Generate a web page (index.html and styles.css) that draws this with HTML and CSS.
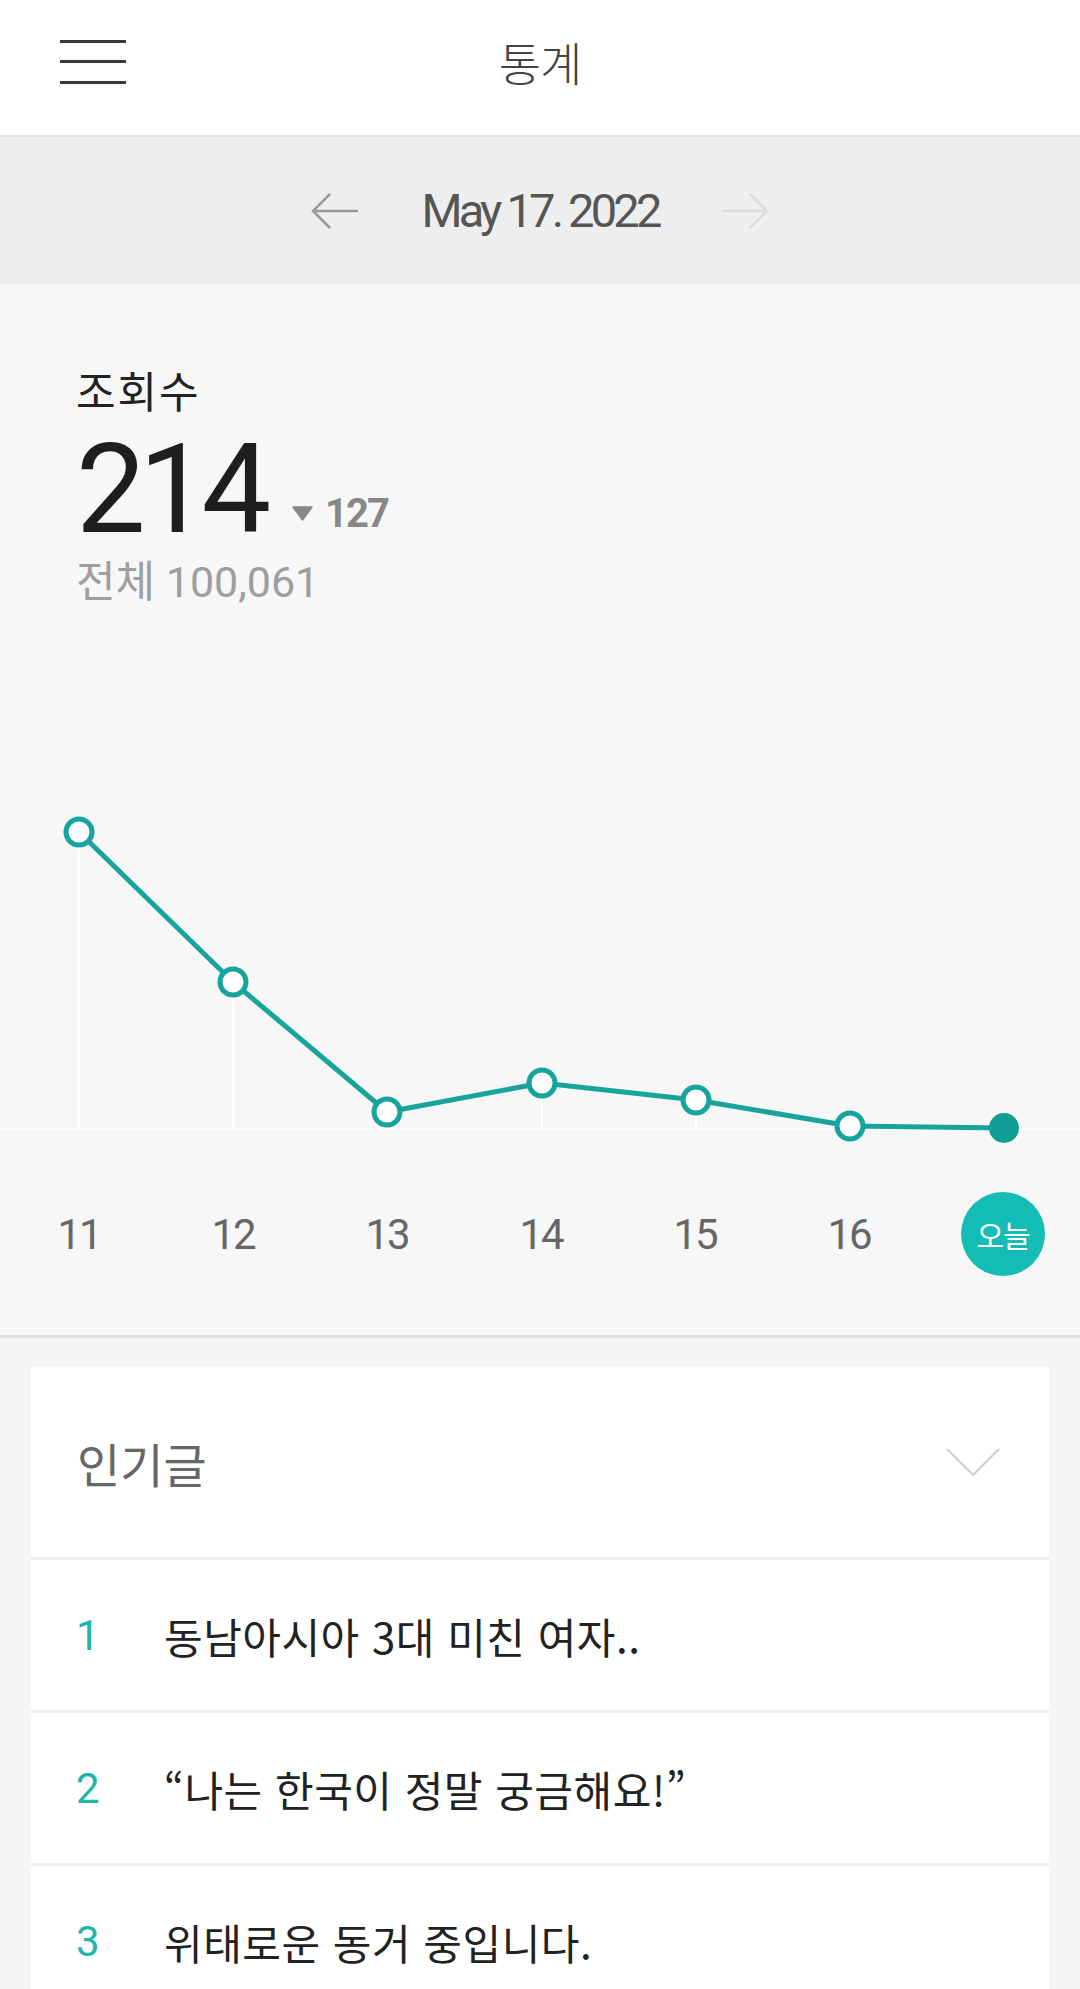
FILE: index.html
```html
<!DOCTYPE html>
<html lang="ko">
<head>
    <meta charset="UTF-8">
    <title>통계</title>
    <link rel="stylesheet" href="styles.css">
</head>
<body>
    <div class="topbar">
        <div class="menu-icon">
            <svg width="66" height="45" viewBox="0 0 66 45">
                <rect x="0" y="0" width="66" height="3"/>
                <rect x="0" y="20" width="66" height="3"/>
                <rect x="0" y="41" width="66" height="3"/>
            </svg>
        </div>
        <div class="title">통계</div>
        <div></div>
    </div>

    <div class="datebar">
        <svg class="arrow prev" width="48" height="38" viewBox="0 0 48 38">
            <path d="M47 19 H3 M19 2 L2 19 L19 36"/>
        </svg>
        <div class="date">May 17. 2022</div>
        <svg class="arrow next" width="48" height="38" viewBox="0 0 48 38">
            <path d="M1 19 H45 M29 2 L46 19 L29 36"/>
        </svg>
    </div>

    <div class="stats">
        <div class="summary">
            <div class="label">조회수</div>
            <div class="count">
                <span class="today">214</span>
                <span class="diff">
                    <svg width="21" height="15" viewBox="0 0 21 15"><path d="M1 1 H20 L10.5 14 Z"/></svg>
                    127
                </span>
            </div>
            <div class="total">전체 100,061</div>
        </div>

        <svg class="chart" width="1080" height="350" viewBox="0 0 1080 350">
            <g class="grid">
                <line x1="0" y1="329" x2="1080" y2="329"/>
                <line x1="79" y1="32" x2="79" y2="329"/>
                <line x1="233" y1="182" x2="233" y2="329"/>
                <line x1="387" y1="312" x2="387" y2="329"/>
                <line x1="542" y1="283" x2="542" y2="329"/>
                <line x1="696" y1="300" x2="696" y2="329"/>
                <line x1="850" y1="326" x2="850" y2="329"/>
            </g>
            <polyline class="trend" points="79,32 233,182 387,312 542,283 696,300 850,326 1004,328"/>
            <g class="dots">
                <circle cx="79" cy="32" r="13"/>
                <circle cx="233" cy="182" r="13"/>
                <circle cx="387" cy="312" r="13"/>
                <circle cx="542" cy="283" r="13"/>
                <circle cx="696" cy="300" r="13"/>
                <circle cx="850" cy="326" r="13"/>
            </g>
            <circle class="dot-today" cx="1004" cy="328" r="15"/>
        </svg>

        <div class="days">
            <div class="day">11</div>
            <div class="day">12</div>
            <div class="day">13</div>
            <div class="day">14</div>
            <div class="day">15</div>
            <div class="day">16</div>
            <div class="day"><span class="today-badge">오늘</span></div>
        </div>
    </div>

    <div class="popular">
        <div class="card">
            <div class="card-head">
                <span>인기글</span>
                <svg class="chevron" width="56" height="30" viewBox="0 0 56 30">
                    <path d="M2 2 L28 28 L54 2"/>
                </svg>
            </div>
            <div class="post"><span class="rank">1</span><span class="post-title">동남아시아 3대 미친 여자..</span></div>
            <div class="post"><span class="rank">2</span><span class="post-title">“나는 한국이 정말 궁금해요!”</span></div>
            <div class="post"><span class="rank">3</span><span class="post-title">위태로운 동거 중입니다.</span></div>
        </div>
    </div>
</body>
</html>
```

FILE: styles.css
```css
body {
    font-family: Roboto, "Noto Sans CJK KR", sans-serif;
    background-color: #f5f5f5;
    margin: 0;
    padding: 0;
    color: #222;
}
.topbar {
    display: grid;
    grid-template-columns: 1fr auto 1fr;
    align-items: center;
    height: 121px;
    padding-bottom: 14px;
    background-color: #fff;
    border-bottom: 2px solid #e2e2e2;
}
.menu-icon {
    padding-left: 60px;
    display: flex;
    margin-top: 4px;
}
.menu-icon rect {
    fill: #3a3a3a;
}
.title {
    font-family: "Noto Sans CJK KR", sans-serif;
    font-size: 46px;
    font-weight: 300;
    color: #444;
    letter-spacing: -1px;
}
.datebar {
    display: flex;
    justify-content: center;
    align-items: center;
    gap: 62px;
    height: 147px;
    background-color: #eee;
}
.date {
    font-size: 47px;
    letter-spacing: -3.8px;
    color: #555;
}
.arrow path {
    fill: none;
    stroke-width: 2.5;
}
.arrow.prev path {
    stroke: #999;
}
.arrow.next path {
    stroke: #dcdcdc;
}
.stats {
    background-color: #f7f7f7;
    border-bottom: 3px solid #e0e0e0;
}
.summary {
    padding: 76px 0 0 76px;
    height: 516px;
    box-sizing: border-box;
}
.label {
    font-family: "Noto Sans CJK KR", sans-serif;
    font-size: 43px;
    letter-spacing: 2px;
    line-height: 58px;
}
.count {
    line-height: 120px;
    height: 120px;
    margin-top: 12px;
}
.today {
    font-size: 124px;
    letter-spacing: -7px;
    color: #1e1e1e;
}
.diff {
    display: inline-flex;
    align-items: center;
    gap: 12px;
    margin-left: 24px;
    font-size: 40px;
    font-weight: 700;
    letter-spacing: -2px;
    color: #888;
    vertical-align: 11px;
    line-height: 40px;
}
.diff path {
    fill: #888;
    stroke: #888;
    stroke-width: 1.5;
    stroke-linejoin: round;
}
.total {
    font-size: 43px;
    color: #9e9e9e;
    line-height: 48px;
    margin-top: 8px;
}
.chart {
    display: block;
}
.grid line {
    stroke: #fff;
    stroke-width: 2;
}
.trend {
    fill: none;
    stroke: #17a49d;
    stroke-width: 5;
    stroke-linejoin: round;
}
.dots circle {
    fill: #fff;
    stroke: #17a49d;
    stroke-width: 5;
}
.dot-today {
    fill: #0f9e96;
}
.days {
    display: grid;
    grid-template-columns: repeat(7, 1fr);
    padding: 42px 0 59px 2px;
}
.day {
    display: flex;
    justify-content: center;
    align-items: center;
    height: 84px;
    font-size: 42px;
    letter-spacing: -2px;
    color: #666;
}
.today-badge {
    display: flex;
    justify-content: center;
    align-items: center;
    width: 84px;
    height: 84px;
    border-radius: 50%;
    background-color: #13bdb5;
    color: #fff;
    font-family: "Noto Sans CJK KR", sans-serif;
    font-size: 30px;
    letter-spacing: -1px;
}
.popular {
    padding: 29px 31px 0;
}
.card {
    display: flex;
    flex-direction: column;
    gap: 3px;
    background-color: #efefef;
}
.card-head {
    display: flex;
    justify-content: space-between;
    align-items: center;
    height: 190px;
    padding: 0 48px 0 46px;
    background-color: #fff;
    font-family: "Noto Sans CJK KR", sans-serif;
    font-size: 47px;
    color: #666;
}
.chevron path {
    fill: none;
    stroke: #cfcfcf;
    stroke-width: 2;
}
.post {
    display: flex;
    align-items: center;
    height: 150px;
    padding-left: 45px;
    background-color: #fff;
    font-family: "Noto Sans CJK KR", sans-serif;
    font-size: 42px;
}
.rank {
    width: 88px;
    font-family: Roboto, sans-serif;
    color: #1fb5ad;
}
.post-title {
    color: #222;
    letter-spacing: 0.5px;
}
```
